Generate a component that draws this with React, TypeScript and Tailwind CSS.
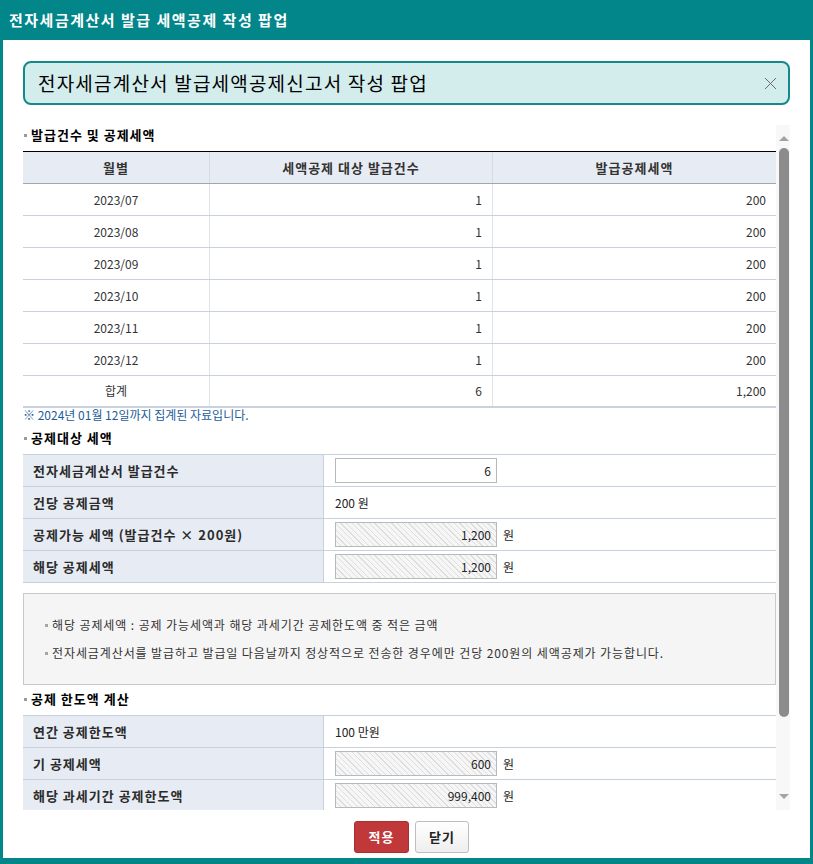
import React from "react";

const months = [
  { month: "2023/07", count: "1", amount: "200" },
  { month: "2023/08", count: "1", amount: "200" },
  { month: "2023/09", count: "1", amount: "200" },
  { month: "2023/10", count: "1", amount: "200" },
  { month: "2023/11", count: "1", amount: "200" },
  { month: "2023/12", count: "1", amount: "200" },
  { month: "합계", count: "6", amount: "1,200" },
];

const striped =
  "bg-[repeating-linear-gradient(45deg,#f6f6f6_0px,#f6f6f6_3px,#dedede_3px,#dedede_4px)]";

function Heading({ children }: { children: React.ReactNode }) {
  return (
    <div className="flex h-[20px] items-center">
      <span className="ml-[1px] mr-[4px] h-[3px] w-[3px] bg-[#9a9a9a]" />
      <span className="text-[13px] font-bold leading-[20px] tracking-[1px] text-black">{children}</span>
    </div>
  );
}

function Field({ value, readOnly, unit }: { value: string; readOnly?: boolean; unit?: string }) {
  return (
    <div className="flex items-center">
      <div
        className={`flex h-[25px] w-[162px] items-center justify-end border border-[#b9b9b9] pr-[5px] text-[12px] text-[#222] ${
          readOnly ? striped : "bg-white"
        }`}
      >
        {value}
      </div>
      {unit && <span className="ml-[6px] text-[12px] text-[#222]">{unit}</span>}
    </div>
  );
}

function FormRow({ label, children }: { label: string; children: React.ReactNode }) {
  return (
    <div className="grid h-[32px] grid-cols-[301px_452px] border-b border-[#c7d1dc]">
      <div className="flex items-center border-r border-[#c7d1dc] bg-[#e7ecf4] pl-[10px] text-[13px] font-bold tracking-[1px] text-[#2b2b2b]">
        {label}
      </div>
      <div className="flex items-center pl-[11px] text-[12px] text-[#222]">{children}</div>
    </div>
  );
}

export default function App() {
  return (
    <div className="flex h-[864px] w-[813px] flex-col bg-[#03868a] font-['Noto_Sans_CJK_KR','Noto_Sans',sans-serif]">
      <div className="flex h-[40px] shrink-0 items-center pl-[9px] text-[15px] font-bold tracking-[1.5px] text-white">
        전자세금계산서 발급 세액공제 작성 팝업
      </div>

      <div className="mx-[3px] mb-[6px] flex flex-1 flex-col bg-white px-[20px] pt-[21px]">
        <div className="flex h-[44px] items-center justify-between rounded-[8px] border-2 border-[#13898b] bg-[#d3ecec] pl-[13px] pr-[11px]">
          <span className="text-[19px] tracking-[1.2px] text-black">전자세금계산서 발급세액공제신고서 작성 팝업</span>
          <svg width="13" height="13" viewBox="0 0 13 13" className="text-[#6b6b6b]">
            <path d="M1 1L12 12M12 1L1 12" stroke="currentColor" strokeWidth="1" fill="none" />
          </svg>
        </div>

        <div className="mt-[20px] flex h-[685px] overflow-hidden">
          <div className="w-[753px] shrink-0 overflow-hidden">
            <Heading>발급건수 및 공제세액</Heading>
            <div className="mt-[6px] border-t border-black">
              <div className="grid h-[32px] grid-cols-[187px_283px_283px] border-b border-[#9fa7b0] bg-[#e7ecf4] text-[13px] font-bold tracking-[1px] text-[#333]">
                <div className="flex items-center justify-center border-r border-[#d4dbe3]">월별</div>
                <div className="flex items-center justify-center border-r border-[#d4dbe3]">세액공제 대상 발급건수</div>
                <div className="flex items-center justify-center">발급공제세액</div>
              </div>
              {months.map((m, i) => (
                <div
                  key={m.month}
                  className={`grid h-[32px] grid-cols-[187px_283px_283px] text-[12px] text-[#333] ${
                    i === months.length - 1 ? "border-b-2 border-[#c9d2dc]" : "border-b border-[#c9d2dc]"
                  }`}
                >
                  <div className="flex items-center justify-center border-r border-[#dfe4ea]">{m.month}</div>
                  <div className="flex items-center justify-end border-r border-[#dfe4ea] pr-[10px]">{m.count}</div>
                  <div className="flex items-center justify-end pr-[10px]">{m.amount}</div>
                </div>
              ))}
            </div>
            <div className="flex h-[13px] items-center text-[12px] leading-[13px] text-[#1c5c99]">
              ※ 2024년 01월 12일까지 집계된 자료입니다.
            </div>

            <div className="mt-[7px]">
              <Heading>공제대상 세액</Heading>
            </div>
            <div className="mt-[6px] border-t border-[#c7d1dc]">
              <FormRow label="전자세금계산서 발급건수">
                <Field value="6" />
              </FormRow>
              <FormRow label="건당 공제금액">200 원</FormRow>
              <FormRow label="공제가능 세액 (발급건수 × 200원)">
                <Field value="1,200" readOnly unit="원" />
              </FormRow>
              <FormRow label="해당 공제세액">
                <Field value="1,200" readOnly unit="원" />
              </FormRow>
            </div>

            <div className="mt-[10px] flex h-[92px] flex-col gap-[12px] border border-[#c9c9c9] bg-[#f5f5f5] pl-[21px] pt-[23px] text-[12px] tracking-[0.9px] text-[#333]">
              <div className="flex h-[16px] items-center">
                <span className="mr-[4px] h-[3px] w-[3px] bg-[#a5a5a5]" />
                해당 공제세액 : 공제 가능세액과 해당 과세기간 공제한도액 중 적은 금액
              </div>
              <div className="flex h-[16px] items-center">
                <span className="mr-[4px] h-[3px] w-[3px] bg-[#a5a5a5]" />
                전자세금계산서를 발급하고 발급일 다음날까지 정상적으로 전송한 경우에만 건당 200원의 세액공제가 가능합니다.
              </div>
            </div>

            <div className="mt-[4px]">
              <Heading>공제 한도액 계산</Heading>
            </div>
            <div className="mt-[6px] border-t border-[#c7d1dc]">
              <FormRow label="연간 공제한도액">100 만원</FormRow>
              <FormRow label="기 공제세액">
                <Field value="600" readOnly unit="원" />
              </FormRow>
              <FormRow label="해당 과세기간 공제한도액">
                <Field value="999,400" readOnly unit="원" />
              </FormRow>
            </div>
          </div>

          <div className="flex w-[15px] shrink-0 flex-col items-center bg-[#f8f8f8]">
            <div className="mt-[11px] h-0 w-0 border-x-[5px] border-b-[5px] border-x-transparent border-b-[#a3a3a3]" />
            <div className="mt-[7px] h-[569px] w-[10px] rounded-full bg-[#8c8c8c]" />
            <div className="flex-1" />
            <div className="mb-[11px] h-0 w-0 border-x-[5px] border-t-[5px] border-x-transparent border-t-[#a3a3a3]" />
          </div>
        </div>

        <div className="mt-[11px] flex justify-center gap-[6px] pl-[10px]">
          <button className="h-[32px] w-[55px] rounded-[3px] border border-[#a92f31] bg-[#c1383b] text-[13px] font-bold tracking-[1px] text-white">
            적용
          </button>
          <button className="h-[32px] w-[54px] rounded-[3px] border border-[#bdbdbd] bg-gradient-to-b from-white to-[#eeeeee] text-[13px] font-bold tracking-[1px] text-[#222]">
            닫기
          </button>
        </div>
      </div>
    </div>
  );
}
